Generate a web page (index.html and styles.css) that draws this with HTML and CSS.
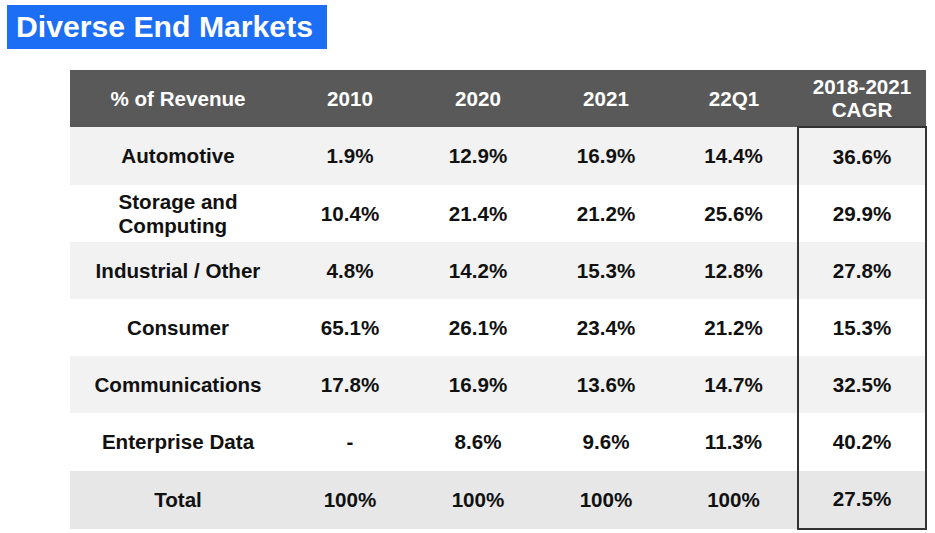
FILE: index.html
```html
<!DOCTYPE html>
<html>
<head>
<meta charset="utf-8">
<link rel="stylesheet" href="styles.css">
</head>
<body>
<div class="title">Diverse End Markets</div>
<table class="markets">
  <colgroup>
    <col class="c-label"><col class="c-val"><col class="c-val"><col class="c-val"><col class="c-val"><col class="c-val">
  </colgroup>
  <thead>
    <tr><th>% of Revenue</th><th>2010</th><th>2020</th><th>2021</th><th>22Q1</th><th class="cagr-h">2018-2021<br>CAGR</th></tr>
  </thead>
  <tbody>
    <tr class="shade"><td>Automotive</td><td>1.9%</td><td>12.9%</td><td>16.9%</td><td>14.4%</td><td class="cagr">36.6%</td></tr>
    <tr><td><span class="two">Storage and<br>Computing</span></td><td>10.4%</td><td>21.4%</td><td>21.2%</td><td>25.6%</td><td class="cagr">29.9%</td></tr>
    <tr class="shade"><td>Industrial / Other</td><td>4.8%</td><td>14.2%</td><td>15.3%</td><td>12.8%</td><td class="cagr">27.8%</td></tr>
    <tr><td>Consumer</td><td>65.1%</td><td>26.1%</td><td>23.4%</td><td>21.2%</td><td class="cagr">15.3%</td></tr>
    <tr class="shade"><td>Communications</td><td>17.8%</td><td>16.9%</td><td>13.6%</td><td>14.7%</td><td class="cagr">32.5%</td></tr>
    <tr><td>Enterprise Data</td><td>-</td><td>8.6%</td><td>9.6%</td><td>11.3%</td><td class="cagr">40.2%</td></tr>
    <tr class="total"><td>Total</td><td>100%</td><td>100%</td><td>100%</td><td>100%</td><td class="cagr last">27.5%</td></tr>
  </tbody>
</table>
</body>
</html>
```
FILE: styles.css
```css
html, body {
  margin: 0;
  padding: 0;
  background: #ffffff;
}
body {
  font-family: "Liberation Sans", Arial, sans-serif;
}
.title {
  display: inline-block;
  margin: 5px 0 0 7px;
  height: 44px;
  line-height: 44px;
  padding: 0 0 0 9px;
  background: #1c6ef4;
  color: #ffffff;
  font-weight: bold;
  font-size: 30.2px;
  box-sizing: border-box;
  width: 320px;
}
.markets {
  margin: 21px 0 0 70px;
  border-collapse: collapse;
  table-layout: fixed;
  width: 857px;
}
.c-label { width: 216px; }
.c-val { width: 128px; }
.markets th, .markets td {
  padding: 0;
  text-align: center;
  vertical-align: middle;
  font-weight: bold;
  font-size: 20.6px;
  color: #111111;
  height: 57.1px;
}
.markets thead th {
  background: #595959;
  color: #ffffff;
  height: 56px;
  line-height: 23px;
}
.markets tbody tr { background: #ffffff; }
.markets tbody tr.shade { background: #f2f2f2; }
.markets tbody tr.total { background: #e7e7e7; }
.two {
  display: inline-block;
  text-align: left;
  line-height: 24px;
}
.markets td.cagr {
  border-left: 2px solid #333333;
  border-right: 2px solid #333333;
}
.markets tbody tr:first-child td.cagr {
  border-top: 2px solid #333333;
}
.markets td.cagr.last {
  border-bottom: 2px solid #333333;
}
```
